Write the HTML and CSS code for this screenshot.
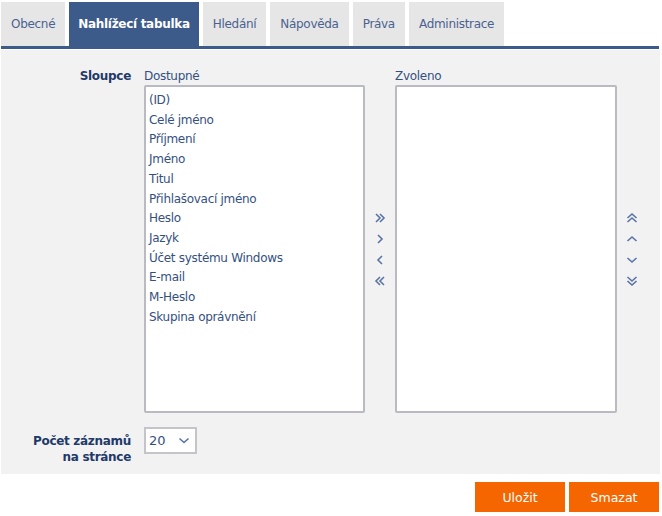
FILE: index.html
```html
<!DOCTYPE HTML>
<html>
<head>
<meta charset="utf-8">
<title>Nahlížecí tabulka</title>
<link rel="stylesheet" href="styles.css">
</head>
<body>
<nav class="tabs">
  <a href="#">Obecné</a>
  <a href="#" class="active">Nahlížecí tabulka</a>
  <a href="#">Hledání</a>
  <a href="#">Nápověda</a>
  <a href="#">Práva</a>
  <a href="#">Administrace</a>
</nav>
<div class="tabline"></div>

<div class="panel">
  <div class="row">
    <div class="label">Sloupce</div>
    <div class="columns">
      <div class="list-block left">
        <div class="caption">Dostupné</div>
        <div class="listbox">
          <div>(ID)</div>
          <div>Celé jméno</div>
          <div>Příjmení</div>
          <div>Jméno</div>
          <div>Titul</div>
          <div>Přihlašovací jméno</div>
          <div>Heslo</div>
          <div>Jazyk</div>
          <div>Účet systému Windows</div>
          <div>E-mail</div>
          <div>M-Heslo</div>
          <div>Skupina oprávnění</div>
        </div>
      </div>
      <div class="arrows">
        <svg width="12" height="10" viewBox="0 0 12 10"><path d="M2 1l4 4-4 4M6 1l4 4-4 4"/></svg>
        <svg width="12" height="10" viewBox="0 0 12 10"><path d="M4 1l4 4-4 4"/></svg>
        <svg width="12" height="10" viewBox="0 0 12 10"><path d="M8 1l-4 4 4 4"/></svg>
        <svg width="12" height="10" viewBox="0 0 12 10"><path d="M6 1l-4 4 4 4M10 1l-4 4 4 4"/></svg>
      </div>
      <div class="list-block right">
        <div class="caption">Zvoleno</div>
        <div class="listbox"></div>
      </div>
      <div class="arrows">
        <svg width="12" height="10" viewBox="0 0 12 10"><path d="M1.5 5l4.5-4 4.5 4M1.5 9l4.5-4 4.5 4"/></svg>
        <svg width="12" height="10" viewBox="0 0 12 10"><path d="M1.5 7l4.5-4 4.5 4"/></svg>
        <svg width="12" height="10" viewBox="0 0 12 10"><path d="M1.5 3l4.5 4 4.5-4"/></svg>
        <svg width="12" height="10" viewBox="0 0 12 10"><path d="M1.5 1l4.5 4 4.5-4M1.5 5l4.5 4 4.5-4"/></svg>
      </div>
    </div>
  </div>

  <div class="row count-row">
    <div class="label">Počet záznamů<br>na stránce</div>
    <div class="select">
      <span>20</span>
      <svg width="12" height="8" viewBox="0 0 12 8"><path d="M1.5 1.5l4.5 4 4.5-4"/></svg>
    </div>
  </div>
</div>

<div class="actions">
  <button>Uložit</button>
  <button>Smazat</button>
</div>
</body>
</html>
```

FILE: styles.css
```css
body {
  font-family: "DejaVu Sans", Verdana, sans-serif;
  font-size: 12px;
  color: #34507f;
  margin: 0;
  padding: 1px 3px 0 1px;
  background-color: #fff;
}
.tabs {
  display: flex;
  gap: 4px;
  padding-top: 1px;
}
.tabs a {
  display: block;
  height: 44px;
  line-height: 45px;
  padding: 0 10px;
  background-color: #e6e6e6;
  color: #4a6290;
  text-decoration: none;
  font-size: 12px;
  letter-spacing: -0.3px;
}
.tabs a.active {
  background-color: #3c5a8a;
  color: #fff;
  font-weight: bold;
  padding: 0 9px;
  height: 45px;
  margin-bottom: -1px;
}
.tabline {
  height: 3px;
  background-color: #3c5a8a;
  border-bottom: 1px solid #fff;
}
.panel {
  background-color: #f2f2f2;
  padding: 17px 0 9px 0;
  margin-right: -1px;
}
.row {
  display: flex;
  gap: 13px;
}
.label {
  width: 130px;
  text-align: right;
  font-weight: bold;
  color: #1f3a69;
  line-height: 17px;
  padding-top: 1px;
  letter-spacing: -0.3px;
}
.columns {
  display: flex;
}
.caption {
  line-height: 17px;
  height: 18px;
  padding-top: 1px;
  box-sizing: border-box;
  letter-spacing: -0.3px;
}
.listbox {
  box-sizing: border-box;
  height: 328px;
  background-color: #fff;
  border: 2px solid #b9bac2;
  border-radius: 2px;
  padding: 4px 3px;
  line-height: 19.7px;
  letter-spacing: -0.3px;
}
.left .listbox {
  width: 221px;
}
.right .listbox {
  width: 222px;
}
.arrows {
  width: 30px;
  padding-top: 18px;
  display: flex;
  flex-direction: column;
  justify-content: center;
  align-items: center;
  gap: 11px;
}
.arrows svg path, .select svg path {
  fill: none;
  stroke: #5a74a6;
  stroke-width: 1.6;
}
.count-row {
  margin-top: 14px;
}
.count-row .label {
  line-height: 16px;
  padding-top: 6px;
}
.select {
  box-sizing: border-box;
  width: 53px;
  height: 27px;
  background-color: #fff;
  border: 2px solid #c4c4ca;
  display: flex;
  align-items: center;
  justify-content: space-between;
  padding: 0 5px 0 3px;
  font-size: 13px;
}
.actions {
  display: flex;
  justify-content: flex-end;
  gap: 4px;
  padding-top: 8px;
}
.actions button {
  width: 90px;
  height: 30px;
  border: none;
  background-color: #f56600;
  color: #fff;
  font-family: "DejaVu Sans", Verdana, sans-serif;
  font-size: 12.5px;
  cursor: pointer;
}
```
